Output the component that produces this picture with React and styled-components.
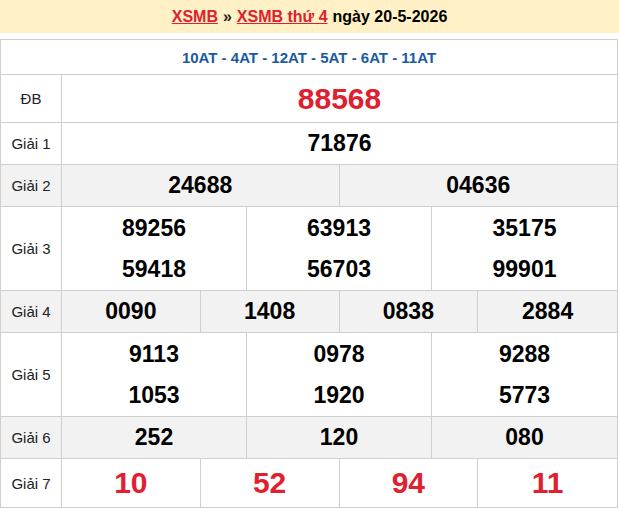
import React from 'react'
import styled, { createGlobalStyle, css } from 'styled-components'

const Global = createGlobalStyle`
  body {
    margin: 0;
    font-family: "Liberation Sans", Arial, sans-serif;
    background: white;
  }
`

const Page = styled.div`
  width: 619px;
`

const Header = styled.div`
  background: #fff1c5;
  height: 33px;
  display: flex;
  align-items: center;
  justify-content: center;
  font-size: 16px;
  font-weight: bold;
  color: #000;
  margin-bottom: 6px;
  a {
    color: #e0202e;
    text-decoration: underline;
  }
  .sep {
    color: #222;
    margin: 0 5px;
  }
  .date {
    margin-left: 5px;
  }
`

const Table = styled.div`
  width: 616px;
  border: 1px solid #cfcfcf;
  border-bottom: none;
`

const Codes = styled.div`
  height: 34px;
  display: flex;
  align-items: center;
  justify-content: center;
  font-size: 15px;
  font-weight: bold;
  color: #1a5b9e;
  border-bottom: 1px solid #cfcfcf;
`

const Row = styled.div`
  display: flex;
  border-bottom: 1px solid #cfcfcf;
  background: ${p => (p.$gray ? '#f2f2f2' : '#fff')};
`

const Label = styled.div`
  width: 60px;
  flex: 0 0 60px;
  border-right: 1px solid #cfcfcf;
  display: flex;
  align-items: center;
  justify-content: center;
  font-size: 15px;
  color: #222;
`

const Grid = styled.div`
  flex: 1;
  display: grid;
  grid-template-columns: repeat(${p => p.$cols}, 1fr);
`

const Cell = styled.div`
  height: ${p => p.$h || 41}px;
  display: flex;
  align-items: center;
  justify-content: center;
  font-size: 23px;
  font-weight: bold;
  color: #000;
  ${p => p.$line && css`
    border-right: 1px solid #cfcfcf;
    &:nth-child(${p.$cols}n) {
      border-right: none;
    }
  `}
  ${p => p.$big && css`
    font-size: 30px;
    color: #e0202e;
  `}
`

const rows = [
  { label: 'ĐB', cols: 1, nums: ['88568'], big: true, h: 47 },
  { label: 'Giải 1', cols: 1, nums: ['71876'] },
  { label: 'Giải 2', cols: 2, nums: ['24688', '04636'], gray: true },
  { label: 'Giải 3', cols: 3, nums: ['89256', '63913', '35175', '59418', '56703', '99901'] },
  { label: 'Giải 4', cols: 4, nums: ['0090', '1408', '0838', '2884'], gray: true },
  { label: 'Giải 5', cols: 3, nums: ['9113', '0978', '9288', '1053', '1920', '5773'] },
  { label: 'Giải 6', cols: 3, nums: ['252', '120', '080'], gray: true },
  { label: 'Giải 7', cols: 4, nums: ['10', '52', '94', '11'], big: true, h: 48 },
]

// two-line prizes share 83px: first line a pixel taller
const cellHeight = (row, i) => {
  if (row.h) return row.h
  if (row.nums.length > row.cols) return i < row.cols ? 42 : 41
  return 41
}

export default function App() {
  return (
    <Page>
      <Global />
      <Header>
        <a>XSMB</a>
        <span className='sep'>»</span>
        <a>XSMB thứ 4</a>
        <span className='date'>ngày 20-5-2026</span>
      </Header>
      <Table>
        <Codes>10AT - 4AT - 12AT - 5AT - 6AT - 11AT</Codes>
        {rows.map(row => (
          <Row key={row.label} $gray={row.gray}>
            <Label>{row.label}</Label>
            <Grid $cols={row.cols}>
              {row.nums.map((n, i) => (
                <Cell
                  key={i}
                  $cols={row.cols}
                  $line={row.cols > 1}
                  $big={row.big}
                  $h={cellHeight(row, i)}
                >
                  {n}
                </Cell>
              ))}
            </Grid>
          </Row>
        ))}
      </Table>
    </Page>
  )
}
